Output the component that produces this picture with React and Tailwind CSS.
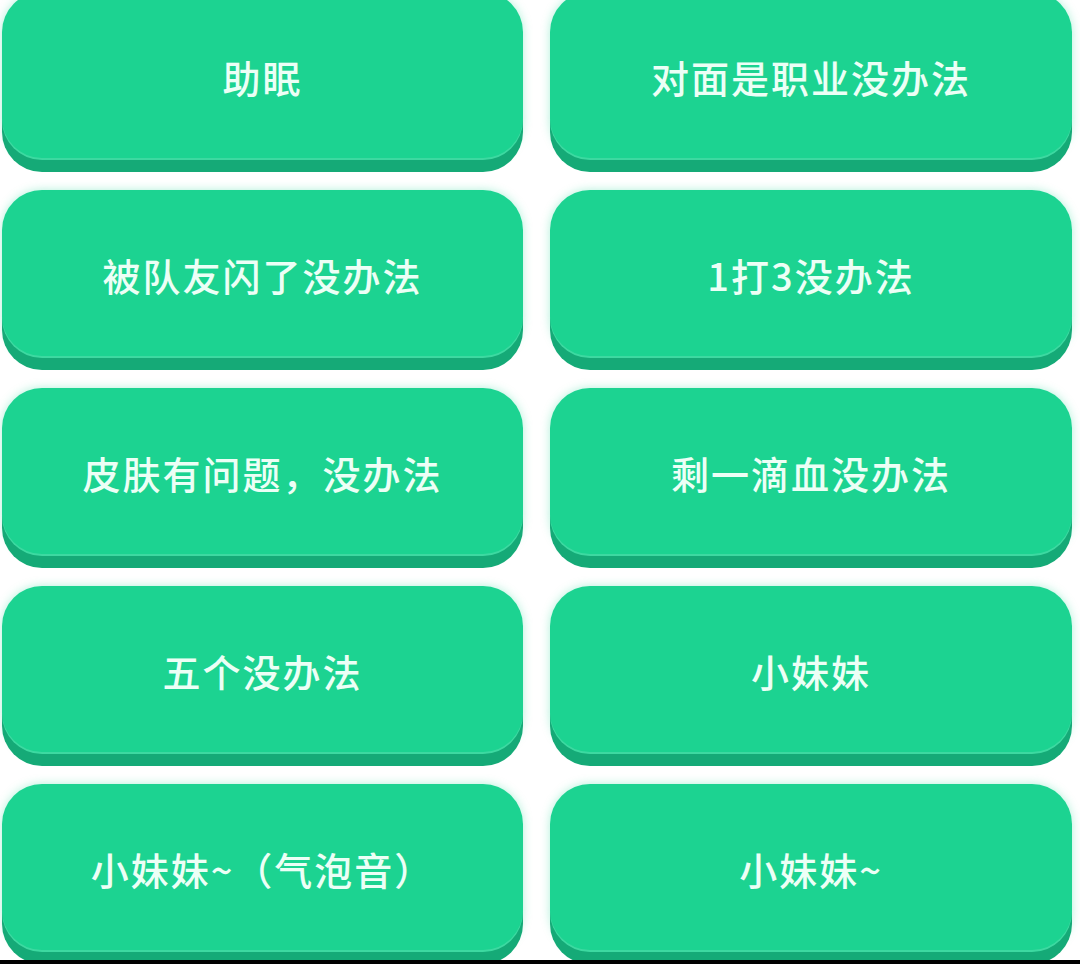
import React from 'react';

const sounds = [
  '助眠',
  '对面是职业没办法',
  '被队友闪了没办法',
  '1打3没办法',
  '皮肤有问题，没办法',
  '剩一滴血没办法',
  '五个没办法',
  '小妹妹',
  '小妹妹~（气泡音）',
  '小妹妹~',
];

const SoundButton = ({ label }) => (
  <button
    className="h-[168px] w-full rounded-[40px] bg-[#1cd391] text-[#ecfff6] font-medium text-[38px] tracking-[2px] shadow-[inset_0_-2px_0_rgba(255,255,255,0.15),0_12px_0_#15aa77,0_0_10px_rgba(29,212,147,0.35)] flex items-center justify-center"
    style={{ fontFamily: '"Noto Sans CJK SC", "Noto Sans", sans-serif' }}
  >
    {label}
  </button>
);

export default function App() {
  return (
    <div className="h-[964px] w-[1080px] bg-white flex flex-col overflow-hidden">
      <div className="h-[960px] overflow-hidden">
        <div className="-mt-2 pl-[2px] grid grid-cols-[521px_522px] gap-x-[27px] gap-y-[30px]">
          {sounds.map((s) => (
            <SoundButton key={s} label={s} />
          ))}
        </div>
      </div>
      <div className="h-[4px] bg-black" />
    </div>
  );
}
